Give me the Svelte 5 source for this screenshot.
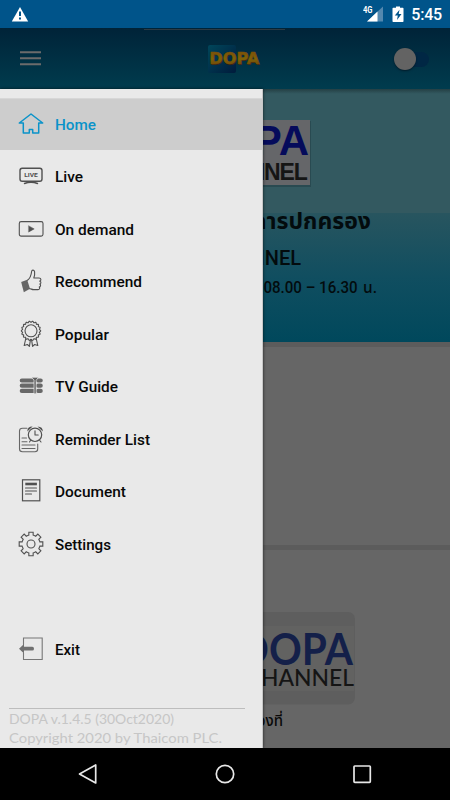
<script>
  const items = [
    ['home', 'Home', 41], ['live', 'Live', 28], ['video', 'On demand', 79], ['thumb', 'Recommend', 87],
    ['award', 'Popular', 54], ['guide', 'TV Guide', 63], ['reminder', 'Reminder List', 95],
    ['document', 'Document', 71], ['settings', 'Settings', 56]
  ];

  const badge = Array.from({ length: 145 }, (_, i) => {
    const a = (i / 144) * Math.PI * 2;
    const r = 9.1 + 0.6 * Math.cos(a * 18);
    return `${(14 + r * Math.cos(a)).toFixed(2)},${(10.8 + r * Math.sin(a)).toFixed(2)}`;
  }).join(' ');

  const gear = Array.from({ length: 8 }, (_, i) =>
    [[9.1, -0.29], [9.1, -0.24], [12, -0.18], [12, 0.18], [9.1, 0.24], [9.1, 0.29]].map(([r, d]) => {
      const a = (i * Math.PI) / 4 + d;
      return `${(14 + r * Math.cos(a)).toFixed(2)},${(14 + r * Math.sin(a)).toFixed(2)}`;
    }).join(' ')
  ).join(' ');
</script>

{#snippet icon(name)}
  <svg class="icon" width="28" height="28" viewBox="0 0 28 28" fill="none" stroke="#505050" stroke-width="1.1" stroke-linejoin="round" stroke-linecap="round">
    {#if name === 'home'}
      <path stroke="#0a93c9" stroke-width="1.5" d="M14 4 2.300 13h4v10h6v-3.600h3.400V23h6V13h4Z" />
    {:else if name === 'live'}
      <rect x="3" y="6.300" width="22" height="13" rx="2.200" stroke-width="1.400" />
      <path d="M7.500 21.500q6.500-2.600 13 0" stroke-width="1.400" />
      <text x="7.200" y="15.200" textLength="13.600" lengthAdjust="spacingAndGlyphs" class="livetext">LIVE</text>
    {:else if name === 'video'}
      <rect x="2.300" y="6.600" width="23.700" height="14.500" rx="1.800" />
      <path d="m11.800 10.900 5.400 3-5.400 3Z" fill="#505050" stroke-width=".5" />
    {:else if name === 'thumb'}
      <path fill="#666" stroke="none" d="m4.200 15 6-2.200 2.800 8.900-6.200 3.600Z" />
      <path d="M10.500 13.200C13.500 11 14.200 8.500 14.600 4.500c.3-2.100 2.700-1.700 3 .3.400 2.600-.3 4.600-.8 6.200h5.200c2.400 0 2.400 2.800.7 3.100 1.700.4 1.500 2.800 0 3 1.400.5 1.100 2.700-.5 2.900 1 .8.500 2.600-1.200 2.600h-4.500c-1.800 0-2.500-1-3.800-.8" />
    {:else if name === 'award'}
      <polygon points={badge} />
      <circle cx="14" cy="10.800" r="6" />
      <path d="m8.800 18.500-1.600 7 3.200-1 2 1.800 1-6.200M19.200 18.500l1.600 7-3.200-1-2 1.800-1-6.200" />
    {:else if name === 'guide'}
      <g stroke="#686868" stroke-width="4.200">
        <path d="M4.800 8.500h12M4.800 13.700h12M4.800 18.900h12M21 8.500h2.700M21 13.700h2.700M21 18.900h2.700" />
      </g>
      <path d="M14.500 5.300h7l-2.300 3v13.500h-2.200V8.300Z" fill="#606060" stroke="#eee" stroke-width=".7" />
    {:else if name === 'reminder'}
      <path d="M10 3.200H5.500Q2.500 3.200 2.500 6v18q0 2.700 3 2.700h12.500q2.700 0 2.700-2.700v-5M5 13h4.500M5 16.800h5M5 20h13M5 23.500h13" stroke="#666" />
      <circle cx="18" cy="9.800" r="6.700" stroke-width="1.200" />
      <path d="M18 5.700V10h3.200M13.500 15.500l-1 1.500M22.800 15.500l1.200 1.500" />
      <path d="M10.300 6.500q0-5 5.300-4.900ZM20.500 1.600q5.500.2 5.300 5Z" fill="#505050" stroke="none" />
    {:else if name === 'document'}
      <rect x="5.500" y="2.800" width="17.300" height="21" stroke-width="1.200" stroke-linejoin="miter" />
      <path d="M8.300 7H19.900" stroke-width="2.600" stroke-linecap="butt" />
      <path d="M8.500 11h11M8.500 14h11M8.500 17h6" />
    {:else if name === 'settings'}
      <polygon points={gear} stroke-linejoin="miter" />
      <circle cx="14" cy="14" r="4" />
    {:else if name === 'exit'}
      <path d="M6.500 9.500V3h18.700v21.500H6.500V18" stroke="#777" stroke-linejoin="miter" />
      <path d="m2 13.700 5-4.700v2.800h8.300q1.700 0 1.700 1.900t-1.700 1.900H7v2.800Z" fill="#707070" stroke="none" />
    {/if}
  </svg>
{/snippet}

{#snippet label(text, width)}
  <svg class="label" width="110" height="24" viewBox="0 0 110 24"><text x="0" y="17.800" textLength={width} lengthAdjust="spacingAndGlyphs">{text}</text></svg>
{/snippet}

<div class="screen">
  <div class="status">
    <svg class="warning" width="18" height="17" viewBox="0 0 18 17">
      <path d="M9 1 17.200 15.500H.8Z" fill="#fff" />
      <path d="M9 5.500v4.500M9 11.500v2" stroke="#00548a" stroke-width="2" />
    </svg>
    <div class="statusright">
      <svg width="20" height="17" viewBox="0 0 20 17">
        <path d="M20 .5v15H4Z" fill="#5388af" />
        <path d="M14.500 5.500v10H4Z" fill="#fff" />
        <text x="0" y="7" fill="#fff" textLength="9.500" lengthAdjust="spacingAndGlyphs" class="network">4G</text>
      </svg>
      <svg class="battery" width="12" height="17" viewBox="0 0 12 17">
        <path d="M1.200 1.700H4V.5h4v1.200h2.800q.7 0 .7.800v12.700q0 .8-.7.800H1.200q-.7 0-.7-.8V2.500q0-.8.7-.8Z" fill="#fff" />
        <path d="M7.500 3.700 2.800 9.500h3L5 13.900l4.500-6H6.700Z" fill="#00548a" />
      </svg>
      <span class="time">5:45</span>
    </div>
  </div>

  <div class="app">
    <header>
      <svg class="burger" width="21" height="15" viewBox="0 0 21 15"><path d="M0 1.200h21M0 7.200h21M0 13.200h21" stroke="#6b6b6b" stroke-width="2" /></svg>
      <svg class="logo" width="56" height="30" viewBox="0 0 56 30">
        <defs>
          <linearGradient id="tile" x1="0" y1="0" x2="1" y2="1"><stop offset="0" stop-color="#00465a" /><stop offset="1" stop-color="#001b3c" /></linearGradient>
          <linearGradient id="gold" x1="0" y1="0" x2="0" y2="1"><stop offset="0" stop-color="#7a4c08" /><stop offset=".5" stop-color="#7e6208" /><stop offset="1" stop-color="#6b3c08" /></linearGradient>
        </defs>
        <rect x="1" y="1" width="28" height="28" rx="2" fill="url(#tile)" />
        <text x="3" y="20.700" textLength="50" lengthAdjust="spacingAndGlyphs" class="logotext" fill="#3a2414">DOPA</text>
        <text x="2.300" y="20" textLength="50" lengthAdjust="spacingAndGlyphs" class="logotext" fill="url(#gold)" stroke="url(#gold)" stroke-width=".5">DOPA</text>
      </svg>
      <div class="toggle"><i></i></div>
    </header>

    <svg class="banner" width="450" height="253" viewBox="0 0 450 253">
      <defs>
        <linearGradient id="sea" x1="0" y1="0" x2="0" y2="1"><stop offset="0" stop-color="#28555f" /><stop offset=".5" stop-color="#104e60" /><stop offset="1" stop-color="#00485c" /></linearGradient>
        <linearGradient id="shade" x1="0" y1="0" x2="0" y2="1"><stop offset="0" stop-color="#243f44" /><stop offset="1" stop-color="#335a61" /></linearGradient>
      </defs>
      <rect width="450" height="253" fill="#335960" />
      <rect width="450" height="5" fill="url(#shade)" />
      <rect y="124" width="450" height="129" fill="url(#sea)" />
      <rect x="180" y="32" width="131" height="66" fill="#294a51" />
      <rect x="180" y="31" width="130" height="65" fill="#656669" />
      <text x="309" y="65.500" text-anchor="end" class="big" fill="#050b5b">DOPA</text>
      <text x="306.500" y="91" text-anchor="end" class="channel" fill="#151515">CHANNEL</text>
      <text x="371" y="139.500" text-anchor="end" class="thai" fill="#030b0d">กรมการปกครอง</text>
      <text x="301" y="175.500" text-anchor="end" class="sub" fill="#030b0d">CHANNEL</text>
      <text x="263.500" y="204" textLength="94" lengthAdjust="spacingAndGlyphs" class="hours" fill="#030b0d">08.00 – 16.30</text>
      <text x="363" y="204" textLength="14" lengthAdjust="spacingAndGlyphs" class="hours" fill="#030b0d">น.</text>
    </svg>
    <div class="panel"></div>
    <div class="panel channels">
      <svg width="450" height="193" viewBox="0 0 450 193">
        <rect x="180" y="62" width="175" height="92.500" rx="7" fill="#5e5e5e" />
        <rect x="180" y="76" width="174" height="65" fill="#626261" />
        <text x="269" y="114.500" textLength="84" lengthAdjust="spacingAndGlyphs" class="futura" fill="#142049">OPA</text>
        <text x="269" y="114.500" text-anchor="end" class="futura" fill="#142049">D</text>
        <text x="261" y="135.500" textLength="93" lengthAdjust="spacingAndGlyphs" class="futura small" fill="#151515">HANNEL</text>
        <text x="283" y="176" text-anchor="end" class="caption" fill="#090909">ช่องที่</text>
      </svg>
    </div>

    <aside>
      <nav>
        {#each items as [name, text, width], i}
          <div class="item" class:active={i === 0}>{@render icon(name)}{@render label(text, width)}</div>
        {/each}
        <div class="item exit">{@render icon('exit')}{@render label('Exit', 25)}</div>
      </nav>
      <footer>
        <svg width="236" height="39" viewBox="0 0 236 39">
          <text x="0" y="15" textLength="165" lengthAdjust="spacingAndGlyphs">DOPA v.1.4.5 (30Oct2020)</text>
          <text x="0" y="34" textLength="213" lengthAdjust="spacingAndGlyphs">Copyright 2020 by Thaicom PLC.</text>
        </svg>
      </footer>
    </aside>
  </div>

  <div class="bottom">
    <svg width="20" height="22" viewBox="0 0 20 22"><path d="M17.700 2v18L1.500 11Z" /></svg>
    <svg width="20" height="22" viewBox="0 0 20 22"><circle cx="10" cy="11" r="8.700" /></svg>
    <svg width="20" height="22" viewBox="0 0 20 22"><rect x="2" y="3" width="16.300" height="16.300" rx=".8" /></svg>
  </div>
</div>

<style>
  :global(body) { margin: 0; }
  .screen { width: 450px; height: 800px; display: flex; flex-direction: column; overflow: hidden; background: #666; font-family: Roboto, "Noto Sans", sans-serif; }
  svg { display: block; flex: none; }
  .status { height: 28px; box-sizing: border-box; padding: 0 8px 0 11px; background: #00548a; display: flex; justify-content: space-between; align-items: center; flex: none; }
  .statusright { display: flex; align-items: center; height: 28px; }
  .statusright svg:first-child { margin-right: 1px; }
  .battery { margin-left: 8px; }
  .time { font-size: 16px; font-weight: 500; color: #fff; margin-left: 7px; line-height: 28px; padding-top: 1px; letter-spacing: -.2px; }
  .network { font: 700 8.5px Roboto, sans-serif; }
  .app { position: relative; height: 720px; flex: none; display: flex; flex-direction: column; }
  header { height: 61px; flex: none; box-sizing: border-box; padding: 0 21px 0 20px; display: flex; align-items: center; background: linear-gradient(#2c3a43, #2c3a43) 144px 1px / 141px 1px no-repeat, linear-gradient(#002338, #003c4e); }
  .burger { margin-bottom: 1px; }
  .logo { margin-left: 166px; }
  .logotext { font: 700 15.5px "DejaVu Sans", sans-serif; }
  .toggle { width: 35px; height: 22px; display: flex; align-items: center; position: relative; margin-left: auto; }
  .toggle::before { content: ""; position: absolute; left: 6px; top: 4px; width: 29px; height: 15px; border-radius: 8px; background: #002744; }
  .toggle i { position: relative; width: 22px; height: 22px; border-radius: 50%; background: #636363; box-shadow: 0 1px 2px #001b29; }
  .big { font: 700 42px "Liberation Sans", sans-serif; }
  .channel { font: 700 23px "Liberation Sans", sans-serif; letter-spacing: -1.2px; }
  .thai { font: 700 23px "Noto Sans Thai", "Noto Sans", sans-serif; }
  .sub { font: 500 20px Roboto, sans-serif; }
  .hours { font: 500 16px Roboto, "Noto Sans Thai", sans-serif; }
  .panel { height: 203px; box-sizing: border-box; border-top: 5px solid #5c5c5c; background: #666; flex: none; }
  .channels { height: 203px; overflow: hidden; }
  .futura { font: 700 43px Lato, sans-serif; }
  .small { font-size: 23px; font-weight: 500; }
  .caption { font: 500 15px "Noto Sans Thai", "Noto Sans", sans-serif; }
  aside { position: absolute; left: 0; top: 61px; width: 263px; height: 659px; box-sizing: border-box; border-right: 1px solid #c7c7c7; background: #e9e9e9; display: flex; flex-direction: column; box-shadow: 0 0 3px rgba(0, 0, 0, .65); }
  nav { padding-top: 8.5px; height: 619px; box-sizing: border-box; display: flex; flex-direction: column; flex: none; }
  .item { height: 52.5px; box-sizing: border-box; padding-left: 16.5px; display: flex; align-items: center; flex: none; }
  .label { margin-left: 10px; }
  .label text { font-size: 15px; font-weight: 500; fill: #080808; stroke: none; }
  .active { background: #cdcdcd; border-top: 1px solid #d7d7d7; }
  .active .label text { fill: #0a93c9; }
  .exit { margin-top: 52.5px; }
  .livetext { font: 700 6.2px Roboto, sans-serif; fill: #505050; stroke: none; }
  footer { margin: 0 17px 0 9px; border-top: 1px solid #bdbdbd; height: 39px; }
  footer text { font: 400 14px Lato, sans-serif; fill: #c6c6c6; stroke: none; }
  .bottom { height: 52px; background: #000; display: flex; justify-content: center; align-items: center; gap: 117px; flex: none; }
  .bottom svg { fill: none; stroke: #e8e8e8; stroke-width: 1.700; stroke-linejoin: round; }
</style>
